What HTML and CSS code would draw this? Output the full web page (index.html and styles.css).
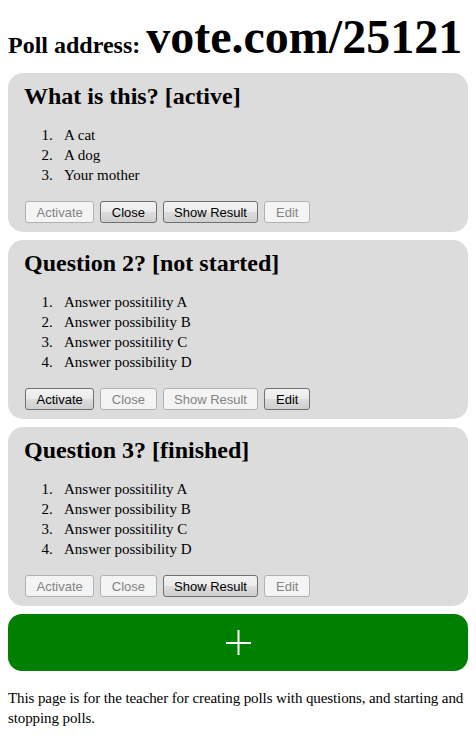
FILE: index.html
```html
<!DOCTYPE html>
<html>
<head>
<meta charset="utf-8">
<link rel="stylesheet" href="styles.css">
</head>
<body>
<div class="header">Poll address: <span class="addr">vote.com/25121</span></div>

<div class="card">
  <h2 class="title">What is this? [active]</h2>
  <ol class="answers">
    <li>A cat</li>
    <li>A dog</li>
    <li>Your mother</li>
  </ol>
  <div class="actions">
    <button class="btn" disabled>Activate</button>
    <button class="btn">Close</button>
    <button class="btn">Show Result</button>
    <button class="btn" disabled>Edit</button>
  </div>
</div>

<div class="card">
  <h2 class="title">Question 2? [not started]</h2>
  <ol class="answers">
    <li>Answer possitility A</li>
    <li>Answer possibility B</li>
    <li>Answer possitility C</li>
    <li>Answer possibility D</li>
  </ol>
  <div class="actions">
    <button class="btn">Activate</button>
    <button class="btn" disabled>Close</button>
    <button class="btn" disabled>Show Result</button>
    <button class="btn">Edit</button>
  </div>
</div>

<div class="card">
  <h2 class="title">Question 3? [finished]</h2>
  <ol class="answers">
    <li>Answer possitility A</li>
    <li>Answer possibility B</li>
    <li>Answer possitility C</li>
    <li>Answer possibility D</li>
  </ol>
  <div class="actions">
    <button class="btn" disabled>Activate</button>
    <button class="btn" disabled>Close</button>
    <button class="btn">Show Result</button>
    <button class="btn" disabled>Edit</button>
  </div>
</div>

<div class="add">
  <svg width="25" height="25" viewBox="0 0 25 25"><path d="M0 13H25M12.5 0V25" stroke="#fff" stroke-width="2" fill="none"/></svg>
</div>

<p class="note">This page is for the teacher for creating polls with questions, and starting and stopping polls.</p>
</body>
</html>
```
FILE: styles.css
```css
body {
  margin: 8px;
  font-family: "Liberation Serif", "Times New Roman", serif;
  color: #000;
  background: #fff;
}
.header {
  margin: 5px 0 12px;
  font-weight: bold;
  font-size: 24px;
  line-height: 24px;
}
.addr {
  font-size: 48px;
  line-height: 48px;
}
.card {
  background: #dcdcdc;
  border-radius: 15px;
  padding: 10px 16px 9px;
  margin-bottom: 8px;
}
.title {
  margin: 0;
  font-size: 24px;
  line-height: 27px;
}
.answers {
  margin: 15px 0 16px;
  padding-left: 40px;
  font-size: 15px;
  line-height: 20px;
}
.answers li::marker {
  content: counter(list-item) ".\2002\00a0";
}
.actions {
  display: flex;
  gap: 6px;
  padding-left: 1px;
}
.btn {
  font-family: "Liberation Sans", Arial, sans-serif;
  font-size: 13px;
  height: 22px;
  padding: 0 10.5px;
  margin: 0;
  border: 1px solid #707070;
  border-radius: 3px;
  color: #000;
  background: linear-gradient(#f2f2f2 0%, #ebebeb 50%, #dddddd 50%, #cfcfcf 100%);
}
.btn:disabled {
  border-color: #adb2b5;
  color: #838383;
  background: #f4f4f4;
}
.add {
  background: #008000;
  border-radius: 14px;
  height: 57px;
  display: flex;
  align-items: center;
  justify-content: center;
}
.add svg {
  display: block;
}
.note {
  margin: 17px 0 0;
  font-size: 15px;
  letter-spacing: -0.1px;
  line-height: 20px;
}
```
